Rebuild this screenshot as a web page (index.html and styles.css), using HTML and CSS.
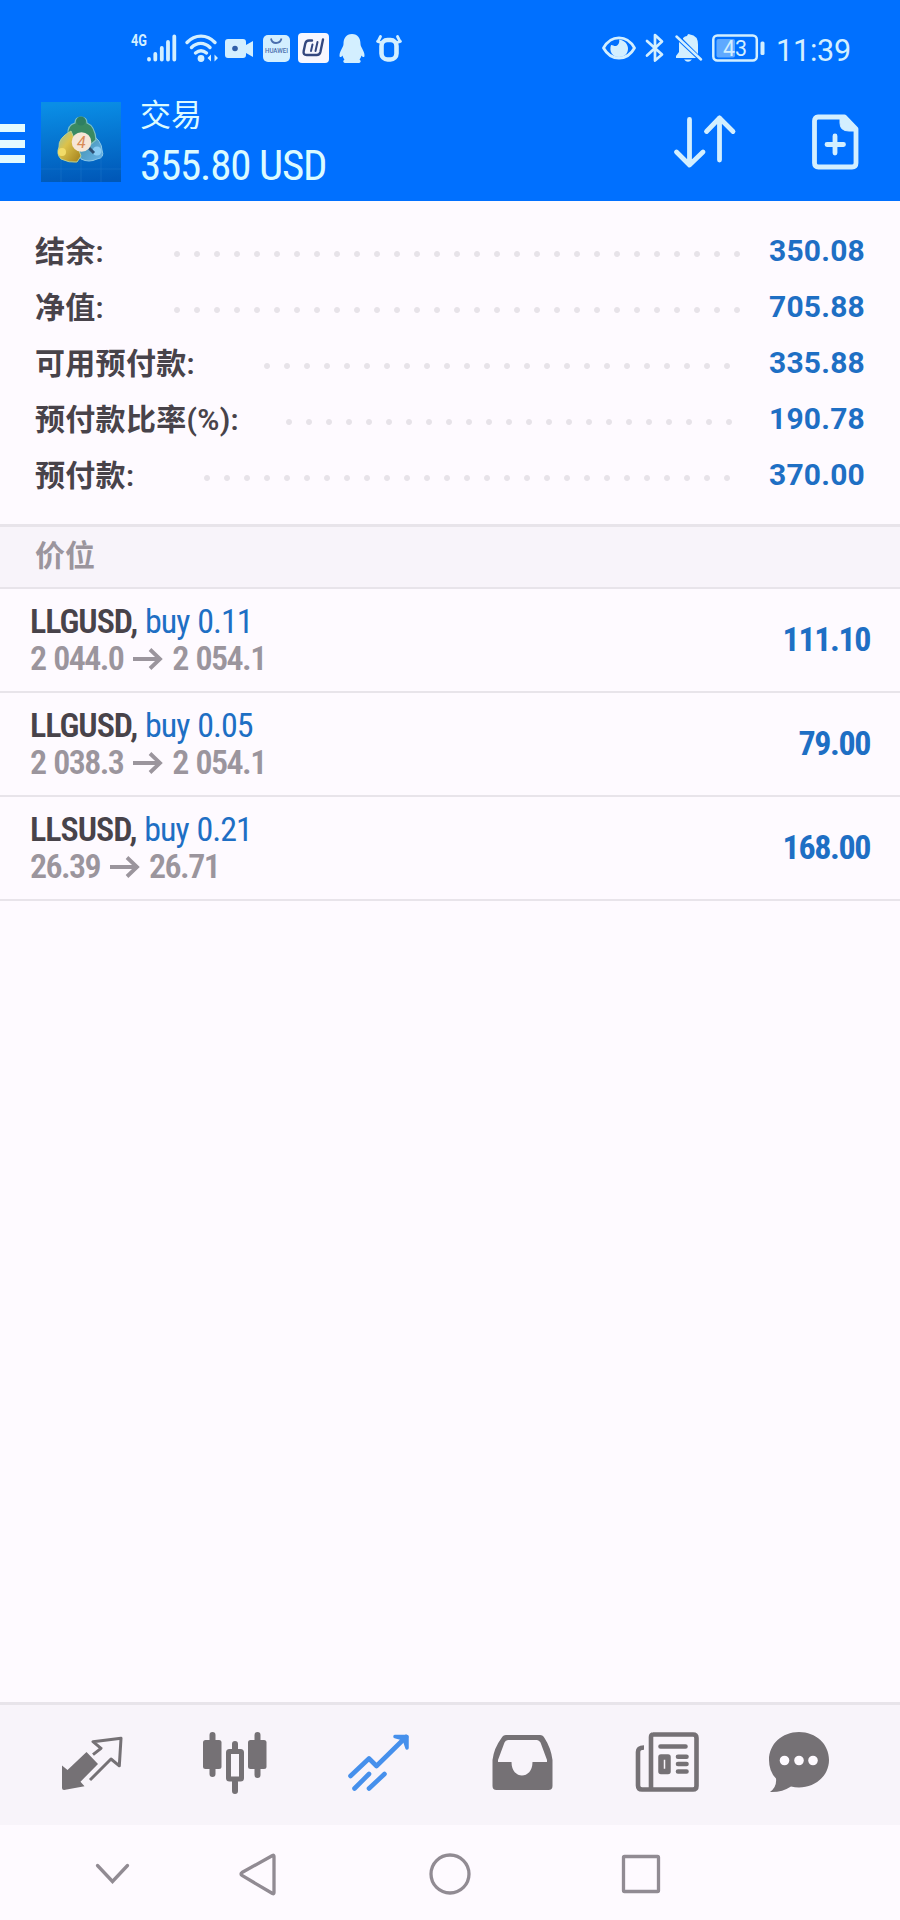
FILE: index.html
```html
<!DOCTYPE html>
<html lang="zh-CN">
  <head>
    <meta charset="UTF-8" />
    <meta name="viewport" content="width=device-width, initial-scale=1.0" />
    <title>交易</title>
    <link rel="stylesheet" href="styles.css">
  </head>
  <body>
    <div class="statusbar">
      <div class="status-icons">
        <svg width="48" height="36" viewBox="0 0 48 36">
          <text class="net" x="1" y="16" textLength="16" lengthAdjust="spacingAndGlyphs">4G</text>
          <g fill="none" stroke="currentColor" stroke-width="3.8" stroke-linecap="round">
            <path d="M19 29v.5M25.3 24v5.500M31.800 18v11.500M38 12v17.500M44.300 6.500v23" />
          </g>
        </svg>
        <svg width="34" height="36" viewBox="0 0 34 36">
          <g fill="none" stroke="currentColor" stroke-width="3.400" stroke-linecap="round">
            <path d="M3 12.500c8-8.500 20-8.500 28 0M7.500 17.500c5.500-5.500 13-5.500 18.500 0M11.500 23c3.500-3 7.500-3 11 0" />
          </g>
          <circle cx="17" cy="28.500" r="3.400" fill="currentColor" />
          <path d="M23.500 28l3.500-3.500v7zM34 28l-3.500-3.500v7z" fill="currentColor" />
        </svg>
        <svg width="32" height="36" viewBox="0 0 32 36">
          <path fill="currentColor" d="M4 9h15q3 0 3 3v3l7-4v16l-7-4v2q0 3-3 3H4q-3 0-3-3V12q0-3 3-3z" />
          <circle cx="11" cy="18.500" r="2.800" class="ink" />
        </svg>
        <svg width="29" height="36" viewBox="0 0 29 36">
          <rect x="1" y="5" width="27" height="27" rx="5" fill="currentColor" />
          <path d="M9 8.500c1 6 9 6 10.500 0" fill="none" stroke="#4b6fae" stroke-width="1.800" />
          <text class="bag-name" x="3" y="23" textLength="23" lengthAdjust="spacingAndGlyphs">HUAWEI</text>
        </svg>
        <svg width="34" height="36" viewBox="0 0 34 36">
          <rect x="1" y="3" width="31" height="30" rx="4" fill="#f7f7ff" />
          <g fill="none" stroke="#34477f" stroke-width="2.400" stroke-linecap="round">
            <path d="M15 10.500h-3q-3 0-3.700 3l-1.600 7.500q-.8 4 3 4h10q3 0 3.700-3L26 9.500" />
            <path d="M15.500 14.500l-1.500 6.500M20.500 12l-2 9" stroke-width="2" />
          </g>
        </svg>
        <svg width="30" height="36" viewBox="0 0 30 36">
          <path fill="currentColor" d="M15 4c-6 0-8.500 4.500-8.500 10 0 3-4 7-4 11.500 0 2 1.500 2 3 0 .5 2 1.300 3 2 4-2 1.500-1.500 3.500 1.500 3.500h12c3 0 3.500-2 1.500-3.500.7-1 1.500-2 2-4 1.500 2 3 2 3 0 0-4.500-4-8.500-4-11.500 0-5.500-2.500-10-8.500-10z" />
        </svg>
        <svg width="32" height="36" viewBox="0 0 32 36">
          <rect x="8.500" y="10" width="15" height="19.500" rx="6" fill="none" stroke="currentColor" stroke-width="4.600" />
          <path d="M4.500 11.500L9.500 13M5 11.500l2.500-5M27.500 11.500L22.500 13M27 11.500l-2.500-5" stroke="currentColor" stroke-width="2.800" fill="none" stroke-linecap="round" />
        </svg>
      </div>
      <div class="status-icons">
        <svg width="36" height="36" viewBox="0 0 36 36">
          <path d="M2.500 18C10 4.500 26 4.500 33.500 18 26 31.500 10 31.500 2.500 18z" fill="none" stroke="currentColor" stroke-width="2.800" stroke-linejoin="round" />
          <path d="M18 9.500c1 3-1 6-3 6.500-2 .5-2.500-1-5-1-2 6 1 12 8 12 12 0 12-16 0-17.500z" fill="currentColor" />
        </svg>
        <svg width="25" height="36" viewBox="0 0 25 36">
          <path d="M4 11l15 13.500-7 6V5l7 6.500L4 25.500" fill="none" stroke="currentColor" stroke-width="2.700" stroke-linejoin="round" stroke-linecap="round" />
        </svg>
        <svg width="30" height="36" viewBox="0 0 30 36">
          <path fill="currentColor" d="M9 8q2-2 4-2 1-3 3-1.500 8 1 8 10V24L9 9zM5 12l17 16H2v-2l3-4zM10 29.500h8q-4 4.500-8 0z" />
          <path d="M2.500 6.500L27 29.500" stroke="currentColor" stroke-width="2.500" stroke-linecap="round" />
        </svg>
        <svg width="58" height="36" viewBox="0 0 58 36">
          <rect x="3.300" y="5.500" width="43.500" height="25" rx="4" fill="none" stroke="currentColor" stroke-width="2.500" />
          <rect x="6.500" y="9" width="18.500" height="18.500" rx="2" fill="currentColor" opacity=".45" />
          <rect x="50.500" y="11.500" width="4" height="13.500" rx="1.500" fill="currentColor" />
          <text class="battery-level" x="13" y="26" textLength="24" lengthAdjust="spacingAndGlyphs">43</text>
        </svg>
        <span class="clock">11:39</span>
      </div>
    </div>

    <header class="header">
      <div class="menu"><i></i><i></i><i></i></div>
      <svg class="logo" width="80" height="80" viewBox="0 0 80 80">
        <defs>
          <linearGradient id="sky" x1="0.500" y1="0" x2="0.600" y2="1">
            <stop offset="0" stop-color="#0a8ee6" />
            <stop offset="1" stop-color="#0058b8" />
          </linearGradient>
          <linearGradient id="gold" x1="0" y1="0" x2="1" y2="1">
            <stop offset="0" stop-color="#8fc2ae" />
            <stop offset=".4" stop-color="#dcc24a" />
            <stop offset="1" stop-color="#a07d1a" />
          </linearGradient>
          <linearGradient id="steel" x1="0" y1="0" x2="1" y2="1">
            <stop offset="0" stop-color="#3b8aa0" />
            <stop offset="1" stop-color="#6ab4ec" />
          </linearGradient>
        </defs>
        <rect width="80" height="80" fill="url(#sky)" />
        <path d="M0 67h80M20 52v28M40 52v28M60 52v28" stroke="#2a82d0" stroke-width=".6" opacity=".6" />
        <path d="M49 31q12 8 12 17 3 8-5 9-8 4-16 0l-3-10 12-5z" fill="url(#steel)" stroke="#8bc8e8" stroke-width="1" />
        <path d="M27 33q-1-10 7-12 0-6 6-6t6 6q8 3 9 17l-6 5-19-5z" fill="#3a8a62" stroke="#7fc0c4" stroke-width="1.200" />
        <path d="M30 29q-13 7-12 16-3 7 2 12 8 4 16 3l4-6-4-11z" fill="url(#gold)" stroke="#b8cf92" stroke-width="1" />
        <circle cx="40" cy="19" r="4.500" fill="#2f7f62" />
        <circle cx="21" cy="50" r="4" fill="#f2dc68" />
        <circle cx="56" cy="49" r="4.500" fill="#8accf4" />
        <path d="M48 46l5 5" stroke="#2e4f74" stroke-width="3" />
        <circle cx="40.500" cy="40" r="9.800" fill="#f6e6d6" />
        <text class="logo-mark" x="36" y="46">4</text>
      </svg>
      <div class="account">
        <div class="account-title">交易</div>
        <div class="account-profit">355.80 USD</div>
      </div>
      <svg class="sort" width="66" height="60" viewBox="0 0 66 60" fill="none" stroke="currentColor" stroke-width="4.800" stroke-linecap="round" stroke-linejoin="round">
        <path d="M17.500 7.500v45M4.500 40L17.500 53 31 40M47.500 48V6M34.500 19.500L47.500 6 61 19.500" />
      </svg>
      <svg class="new-order" width="50" height="60" viewBox="0 0 50 60" fill="none" stroke="currentColor" stroke-width="4.800" stroke-linecap="round" stroke-linejoin="round">
        <path d="M7 5H33.500L45 17v34q0 4-4 4H7.500q-4 0-4-4V9q0-4 3.500-4z" />
        <path d="M29 6v5q0 8 9 8h6L34 6z" fill="currentColor" stroke-width="1" />
        <path d="M24 24v17M16 32.500h16.500" />
      </svg>
    </header>

    <section class="summary">
      <div class="summary-row"><span>结余:</span><i class="dots dots-long"></i><b>350.08</b></div>
      <div class="summary-row"><span>净值:</span><i class="dots dots-long"></i><b>705.88</b></div>
      <div class="summary-row"><span>可用预付款:</span><i class="dots dots-free"></i><b>335.88</b></div>
      <div class="summary-row"><span>预付款比率(%):</span><i class="dots dots-level"></i><b>190.78</b></div>
      <div class="summary-row"><span>预付款:</span><i class="dots dots-margin"></i><b>370.00</b></div>
    </section>

    <div class="section-title">价位</div>

    <ul class="positions">
      <li>
        <div>
          <div class="symbol">LLGUSD, <span>buy 0.11</span></div>
          <div class="prices">2 044.0 <svg class="arrow" viewBox="0 0 30 24"><path d="M0 12h27M17 2.500l10 9.500-10 9.500" /></svg> 2 054.1</div>
        </div>
        <div class="profit">111.10</div>
      </li>
      <li>
        <div>
          <div class="symbol">LLGUSD, <span>buy 0.05</span></div>
          <div class="prices">2 038.3 <svg class="arrow" viewBox="0 0 30 24"><path d="M0 12h27M17 2.500l10 9.500-10 9.500" /></svg> 2 054.1</div>
        </div>
        <div class="profit">79.00</div>
      </li>
      <li>
        <div>
          <div class="symbol">LLSUSD, <span>buy 0.21</span></div>
          <div class="prices">26.39 <svg class="arrow" viewBox="0 0 30 24"><path d="M0 12h27M17 2.500l10 9.500-10 9.500" /></svg> 26.71</div>
        </div>
        <div class="profit">168.00</div>
      </li>
    </ul>

    <nav class="tabs">
      <!-- quotes -->
      <svg viewBox="0 0 72 72">
        <path fill="currentColor" d="M31.500 25L43 37 25.500 54.700l4 4.500L9 63q-2 0-2-2V38.500l5.500 4.500z" />
        <path d="M38 27.700l8-6.400-8-6.600 28-3.400-1.700 27.500L56 32 35 53" fill="none" stroke="currentColor" stroke-width="3" stroke-linejoin="round" />
      </svg>
      <!-- chart -->
      <svg viewBox="1 0 72 72">
        <g stroke="currentColor" stroke-width="6" stroke-linecap="round">
          <path d="M14.500 8v39M59.500 8v40M37 17v7M37 55v9" />
        </g>
        <rect x="5" y="13" width="18.500" height="29" rx="2.500" fill="currentColor" />
        <rect x="50" y="13" width="18.500" height="29" rx="2.500" fill="currentColor" />
        <rect x="30.500" y="24.500" width="13" height="27.500" rx="1" fill="none" stroke="currentColor" stroke-width="5" />
      </svg>
      <!-- trade -->
      <svg class="active" viewBox="1 0 72 72" fill="none" stroke="currentColor" stroke-width="4.600" stroke-linecap="round" stroke-linejoin="round">
        <path d="M8.500 49L27 31.500l7.500 7.500L64 10M12.500 61.500L27 47M27 61.500L42.500 47" />
        <path d="M53 9.500h12V21L62 12z" fill="currentColor" stroke-width="3.500" />
      </svg>
      <!-- history -->
      <svg viewBox="0 0 72 72">
        <path fill="currentColor" fill-rule="evenodd" d="M19 8h34q3 0 4.500 3Q64 21 65.500 33v26q0 4-4 4h-52q-4 0-4-4V33Q7 21 14.500 11q1.500-3 4.500-3zM21 13q-2.500 0-3.500 2.500L11 33v2h13.500c0 18 21 18 21 0H60v-2l-6.500-17.500Q52 13 50 13z" />
      </svg>
      <!-- news -->
      <svg viewBox="0 0 72 72" fill="none" stroke="currentColor" stroke-width="4.600" stroke-linejoin="round">
        <path d="M22 7.500h40q3.500 0 3.500 3.500v48q0 3.500-3.500 3.500H11q-4 0-4-4V25q0-4.500 6-4.500M20 62V10q0-2.500 2.500-2.500" />
        <path d="M29.500 19.500h25M47 29.700h8.500M47 37h8.500M47 44.500h8.500" stroke-linecap="round" />
        <rect x="30" y="30" width="7" height="14.500" stroke-width="5.500" />
      </svg>
      <!-- messages -->
      <svg viewBox="0 0 72 72">
        <path fill="currentColor" d="M36 5c17 0 30 12 30 28S52 60.500 36 60.500q-4 0-8-1-9 6-21 5.500 7-5 6-13.500Q6 44.500 6 33C6 17 19 5 36 5z" />
        <g class="hole"><circle cx="21.500" cy="33.500" r="4.800" /><circle cx="36" cy="33.500" r="4.800" /><circle cx="50" cy="33.500" r="4.800" /></g>
      </svg>
    </nav>

    <footer class="sysnav">
      <svg viewBox="0 0 48 48"><path d="M9.500 15.500L24.500 31.500 39.500 15.500" /></svg>
      <svg viewBox="0 0 48 48"><path d="M38.500 5.500q1.500-1 1.500 1v36q0 2-1.500 1L8 25.500q-2-1.500 0-3z" /></svg>
      <svg viewBox="0 0 48 48"><circle cx="24" cy="24" r="19" /></svg>
      <svg viewBox="0 0 48 48"><rect x="5.500" y="6.500" width="35" height="35" rx="1" /></svg>
    </footer>
  </body>
</html>
```

FILE: styles.css
```css
:root {
  --primary: #0070ff;
  --on-primary: #d3efff;
  --background: #fefaff;
  --panel: #f8f4fa;
  --line: #e8e4ea;
  --text: #48434a;
  --muted: #9b959d;
  --link: #1e6fc4;
  --icon: #757175;
}

* {
  box-sizing: border-box;
}

body {
  margin: 0;
  width: 900px;
  height: 1920px;
  display: flex;
  flex-direction: column;
  background: var(--background);
  color: var(--text);
  font-family: Roboto, "Noto Sans CJK SC", sans-serif;
}

svg {
  display: block;
  flex: none;
}

.statusbar {
  height: 90px;
  padding: 30px 49px 0 130px;
  display: flex;
  justify-content: space-between;
  background: var(--primary);
  color: var(--on-primary);
}

.status-icons {
  display: flex;
  gap: 6px;
  height: 36px;
}

.net {
  font-size: 16px;
  font-weight: 700;
  fill: currentColor;
}

.ink {
  fill: #2f5fa8;
}

.bag-name {
  font-size: 7px;
  font-weight: 500;
  fill: #4b6fae;
}

.battery-level {
  font-size: 22px;
  fill: currentColor;
}

.clock {
  margin-left: 2px;
  width: 75px;
  font-size: 30.500px;
  letter-spacing: -0.2px;
  line-height: 41px;
  white-space: nowrap;
}

/* App header */
.header {
  height: 111px;
  display: flex;
  background: var(--primary);
  color: var(--on-primary);
}

.menu {
  width: 25px;
  margin-top: 34px;
}

.menu i {
  display: block;
  height: 8px;
  margin-bottom: 7.500px;
  background: #e3fbff;
}

.logo {
  margin: 12px 0 0 15.500px;
}

.account {
  margin: 4px 0 0 19.500px;
  width: 532px;
  color: #dcfbff;
}

.account-title {
  font-size: 31px;
  line-height: 44px;
}

.account-profit {
  font-size: 43px;
  font-weight: 450;
  letter-spacing: -1.200px;
  line-height: 50px;
  font-stretch: 75%;
  margin-top: 2px;
}

.sort {
  margin-top: 22px;
}

.new-order {
  margin: 22px 0 0 73px;
}

/* Account summary */
.summary {
  height: 323px;
  padding: 21px 35px 0 35px;
}

.summary-row {
  display: flex;
  align-items: center;
  height: 56px;
}

.summary-row span {
  font-size: 30px;
  font-weight: 600;
  letter-spacing: 0.3px;
  margin: 0 auto 2px 0;
}

.summary-row b {
  width: 96px;
  font-size: 30px;
  font-weight: 700;
  letter-spacing: 0.2px;
  color: var(--link);
}

.dots {
  height: 20px;
  margin: 7px 22px 0 0;
  background: radial-gradient(circle, #e7e3e9 2.500px, transparent 3.500px) 0 0 / 20px 20px;
}

.dots-long {
  width: 580px;
}

.dots-free {
  width: 480px;
  margin-right: 32px;
}

.dots-level {
  width: 460px;
  margin-right: 30px;
}

.dots-margin {
  width: 540px;
  margin-right: 32px;
}

.section-title {
  height: 65px;
  padding-left: 35px;
  border-top: 3px solid var(--line);
  border-bottom: 2px solid var(--line);
  background: var(--panel);
  color: var(--muted);
  font-family: "Noto Sans CJK SC", sans-serif;
  font-size: 30px;
  font-weight: 700;
  line-height: 53px;
}

/* Open positions */
.positions {
  flex: 1;
  margin: 0;
  padding: 0;
  list-style: none;
}

.positions li {
  height: 104px;
  padding: 0 30px;
  display: flex;
  align-items: center;
  justify-content: space-between;
  border-bottom: 2px solid var(--line);
  font-size: 34px;
  font-stretch: 75%;
  line-height: 37px;
}

.symbol {
  font-weight: 600;
  letter-spacing: -1px;
  word-spacing: 1px;
}

.symbol span {
  font-weight: 400;
  color: var(--link);
}

.prices {
  display: flex;
  align-items: center;
  gap: 9.500px;
  color: var(--muted);
  font-weight: 600;
  letter-spacing: -1.600px;
  word-spacing: 1.500px;
}

.arrow {
  width: 30px;
  height: 24px;
  fill: none;
  stroke: currentColor;
  stroke-width: 3.800;
}

.profit {
  font-weight: 700;
  letter-spacing: -1.400px;
  margin-bottom: 2px;
  color: var(--link);
}

/* Bottom tabs */
.tabs {
  height: 123px;
  padding: 22px 0 0 55px;
  display: flex;
  gap: 72px;
  border-top: 3px solid var(--line);
  background: var(--panel);
  color: var(--icon);
}

.tabs svg {
  width: 72px;
  height: 72px;
}

.tabs svg:last-child {
  margin-left: -12.500px;
}

.tabs .active {
  color: #4690ec;
}

.hole {
  fill: var(--background);
}

.sysnav {
  height: 95px;
  padding: 2px 0 0 88px;
  display: flex;
  align-items: center;
  gap: 98px;
}

.sysnav svg {
  width: 48px;
  height: 48px;
  fill: none;
  stroke: #918b93;
  stroke-width: 3.300;
  stroke-linecap: round;
}

.sysnav svg + svg + svg {
  margin-left: 46px;
}

.logo-mark {
  font-size: 16px;
  font-style: italic;
  fill: #d88a55;
}
```
